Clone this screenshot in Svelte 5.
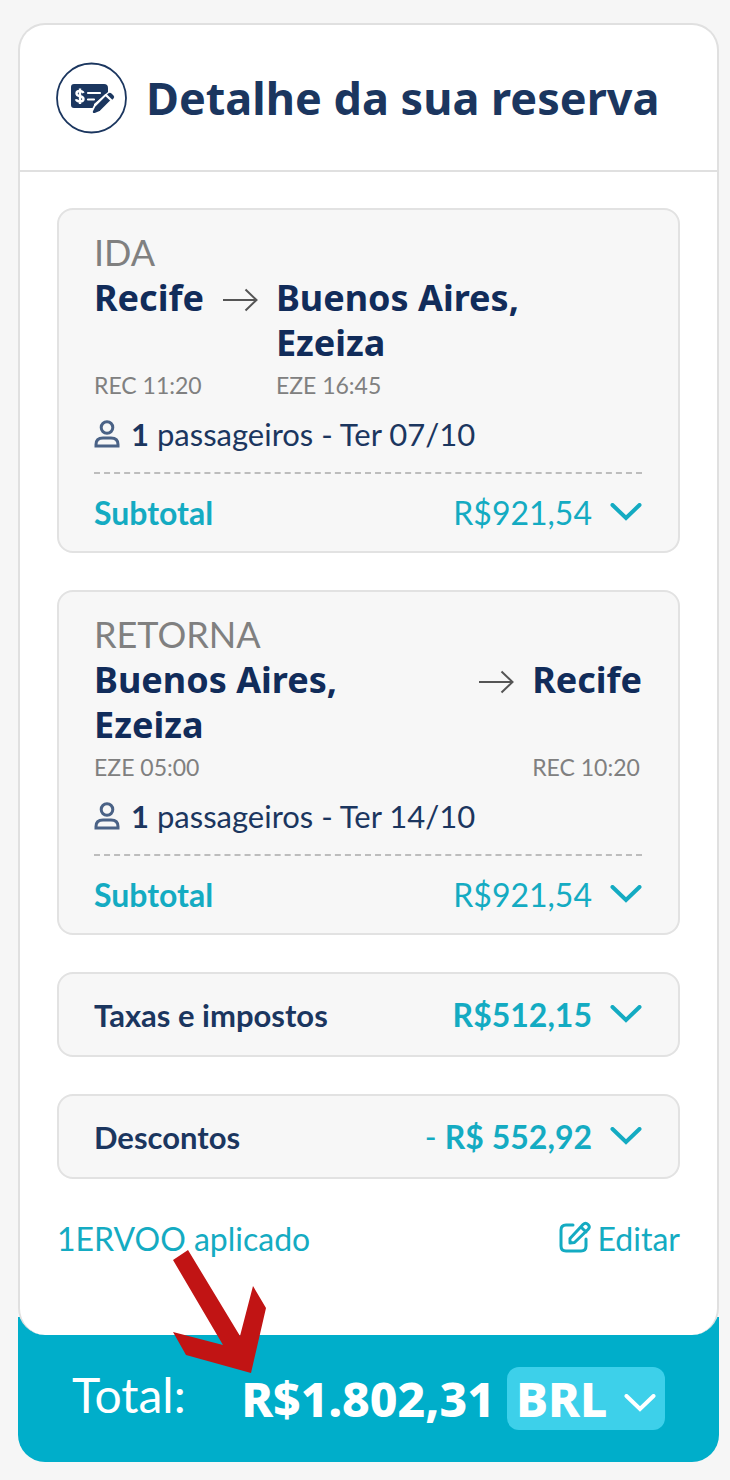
<script>
	let currency = 'BRL';

	const legs = [
		{
			title: 'IDA',
			from: 'Recife',
			fromTime: 'REC 11:20',
			to: 'Buenos Aires,\nEzeiza',
			toTime: 'EZE 16:45',
			date: 'Ter 07/10',
			subtotal: 'R$921,54'
		},
		{
			title: 'RETORNA',
			from: 'Buenos Aires,\nEzeiza',
			fromTime: 'EZE 05:00',
			to: 'Recife',
			toTime: 'REC 10:20',
			date: 'Ter 14/10',
			subtotal: 'R$921,54',
			inbound: true
		}
	];

	const extras = [
		{ label: 'Taxas e impostos', sign: '', value: 'R$512,15' },
		{ label: 'Descontos', sign: '- ', value: 'R$ 552,92' }
	];
</script>

{#snippet chevron()}
	<svg class="chevron" viewBox="0 0 32 20" aria-hidden="true">
		<path d="M2.5 2 L16 15 L29.500 2" />
	</svg>
{/snippet}

<main>
	<section class="card">
		<header>
			<svg class="badge" viewBox="0 0 72 72" aria-hidden="true">
				<circle cx="35.500" cy="36" r="34.500" fill="none" stroke="#1b365f" stroke-width="1.800" />
				<path fill="#1b365f" d="M18 22h30q4 0 4 4v4L38 42v4H18q-3 0-3-3V25q0-3 3-3z" />
				<path stroke="#fff" stroke-width="2.200" stroke-linecap="round" d="M32 31h12M32 37.500h6" />
				<path fill="none" stroke="#fff" stroke-width="2.400" d="M27.500 31q-1-2-4-2t-3 2.500q0 2 3.500 2.700t3.500 2.800q0 2.500-3.500 2.500t-4-2.200M24 26.500v15.500" />
				<path fill="#1b365f" stroke="#fff" stroke-width="1.800" d="M49.500 33l6 5.500L44.500 49.500l-6 2.500q-3 0-2.500-3l2.500-5z" />
				<path fill="#1b365f" d="M51 32.500l1.500-1.300q1.500-1 3 .3l2 2q1.500 1.500 0 3L56.300 37.800z" />
			</svg>
			<h1>Detalhe da sua reserva</h1>
		</header>

		<div class="content">
			{#each legs as leg}
				<article class="box leg">
					<h2>{leg.title}</h2>
					<div class="route" class:inbound={leg.inbound}>
						<div class="stop">
							<strong>{leg.from}</strong>
							<span>{leg.fromTime}</span>
						</div>
						<svg class="arrow" viewBox="0 0 36 24" aria-hidden="true">
							<path d="M1 12H34M23.500 1.500L34.500 12L23.500 22.500" />
						</svg>
						<div class="stop">
							<strong>{leg.to}</strong>
							<span>{leg.toTime}</span>
						</div>
					</div>
					<p class="passengers">
						<svg class="person" viewBox="0 0 26 28" aria-hidden="true">
							<circle cx="13" cy="7.500" r="5.800" />
							<path d="M2 26v-1.500q0-6.500 7-6.500h8q7 0 7 6.500v1.500z" />
						</svg>
						<span><b>1</b> passageiros - {leg.date}</span>
					</p>
					<button class="row subtotal">
						<b>Subtotal</b>
						<span class="value">{leg.subtotal}</span>
						{@render chevron()}
					</button>
				</article>
			{/each}

			{#each extras as extra}
				<button class="box row extra">
					<b>{extra.label}</b>
					<span class="value">{extra.sign}<b>{extra.value}</b></span>
					{@render chevron()}
				</button>
			{/each}

			<div class="coupon">
				<span>1ERVOO aplicado</span>
				<a href="#editar">
					<svg class="edit" viewBox="0 0 32 32" aria-hidden="true">
						<path d="M14 4H7Q2 4 2 9V25Q2 30 7 30H22Q27 30 27 25V18" />
						<path d="M11 22V17.500L24 3.500Q26.500 1 29 3.500T29 8.500L15.500 21.500Z M22 6L27 11" />
					</svg>
					Editar
				</a>
			</div>
		</div>
	</section>

	<footer>
		<span class="total">Total:</span>
		<strong>R$1.802,31</strong>
		<div class="currency">
			<select bind:value={currency} aria-label="Moeda">
				<option>BRL</option>
			</select>
			{@render chevron()}
		</div>
		<svg class="pointer" viewBox="0 0 94 124" aria-hidden="true">
			<path d="M0 10L15 0L67 86L80 36L93 58L78 123L13 105L0 82L50 95Z" />
		</svg>
	</footer>
</main>

<style>
	:global(body) {
		background: #f6f6f6;
	}

	main {
		padding: 23px 11px 18px 18px;
		font-family: Lato, "Liberation Sans", sans-serif;
		font-size: 32px;
		color: #1b365f;
	}

	h1,
	h2,
	p {
		margin: 0;
	}

	button {
		font: inherit;
		color: inherit;
		background: none;
		border: none;
		cursor: pointer;
	}

	.card {
		position: relative;
		z-index: 1;
		background: #fff;
		border: 2px solid #e0e0e0;
		border-bottom: none;
		border-radius: 27px;
	}

	header {
		display: flex;
		align-items: center;
		gap: 18px;
		height: 145px;
		padding: 0 36px;
		border-bottom: 2px solid #e0e0e0;
	}

	.badge {
		width: 72px;
		height: 72px;
		flex: none;
	}

	h1 {
		font-family: "Noto Sans", sans-serif;
		font-size: 45px;
		font-weight: 700;
		line-height: 60px;
		white-space: nowrap;
	}

	.content {
		display: flex;
		flex-direction: column;
		gap: 37px;
		padding: 36px 37px 73px;
	}

	.box {
		background: #f7f7f7;
		border: 2px solid #e2e2e2;
		border-radius: 16px;
		padding: 0 36px 0 35px;
	}

	.leg {
		padding-top: 19px;
	}

	h2 {
		font-size: 36px;
		font-weight: 400;
		line-height: 46px;
		color: #808080;
	}

	.route {
		display: flex;
		gap: 18px;
	}

	.inbound .stop:first-child {
		flex: 1;
	}

	.stop {
		display: flex;
		flex-direction: column;
		justify-content: space-between;
	}

	.stop strong {
		font-family: "Noto Sans", sans-serif;
		font-size: 36px;
		font-weight: 700;
		line-height: 45px;
		white-space: pre-line;
		color: #112c5a;
	}

	.stop span {
		font-size: 23px;
		line-height: 40px;
		color: #808080;
	}

	.arrow {
		width: 36px;
		height: 24px;
		flex: none;
		margin-top: 13px;
		fill: none;
		stroke: #555;
		stroke-width: 2;
	}

	.passengers {
		display: flex;
		align-items: center;
		gap: 11px;
		font-size: 31px;
		line-height: 58px;
		padding-bottom: 9px;
		border-bottom: 2px dashed #bdbdbd;
	}

	.person {
		width: 26px;
		height: 28px;
		fill: none;
		stroke: #4a6286;
		stroke-width: 3;
	}

	.row {
		display: flex;
		align-items: center;
		width: 100%;
		text-align: left;
	}

	.subtotal {
		height: 77px;
		padding: 0;
		color: #14abc2;
	}

	.extra {
		height: 85px;
	}

	.extra > b {
		font-size: 31px;
	}

	.value {
		margin-left: auto;
		margin-right: 18px;
		color: #14abc2;
	}

	.chevron {
		width: 32px;
		height: 20px;
		flex: none;
		fill: none;
		stroke: #14abc2;
		stroke-width: 4;
		stroke-linecap: round;
	}

	.coupon {
		display: flex;
		justify-content: space-between;
		line-height: 46px;
		color: #14abc2;
	}

	.coupon a {
		display: flex;
		align-items: center;
		gap: 7px;
		color: inherit;
		text-decoration: none;
	}

	.edit {
		width: 32px;
		height: 32px;
		margin-bottom: 5px;
		fill: none;
		stroke: #14abc2;
		stroke-width: 3;
		stroke-linecap: round;
		stroke-linejoin: round;
	}

	/* slides up under the rounded bottom of the card */
	footer {
		position: relative;
		display: flex;
		align-items: center;
		height: 127px;
		margin-top: -18px;
		padding: 18px 54px 0;
		color: #fff;
		background: #00aeca;
		border-radius: 0 0 27px 27px;
	}

	.total {
		font-size: 48px;
		margin-right: auto;
		padding-bottom: 8px;
	}

	footer strong,
	select {
		font-family: "Noto Sans", sans-serif;
		font-size: 48px;
		font-weight: 800;
	}

	.currency {
		display: flex;
		align-items: center;
		height: 63px;
		margin-left: 12px;
		padding: 0 9px;
		background: #3dd0ea;
		border-radius: 12px;
	}

	.currency select {
		appearance: none;
		padding: 0;
		margin-right: 16px;
		color: #fff;
		background: none;
		border: none;
	}

	.currency .chevron {
		margin-top: 10px;
		stroke: #fff;
	}

	.pointer {
		position: absolute;
		z-index: 2;
		left: 155px;
		top: -67px;
		width: 94px;
		height: 124px;
		fill: #c11414;
	}
</style>
